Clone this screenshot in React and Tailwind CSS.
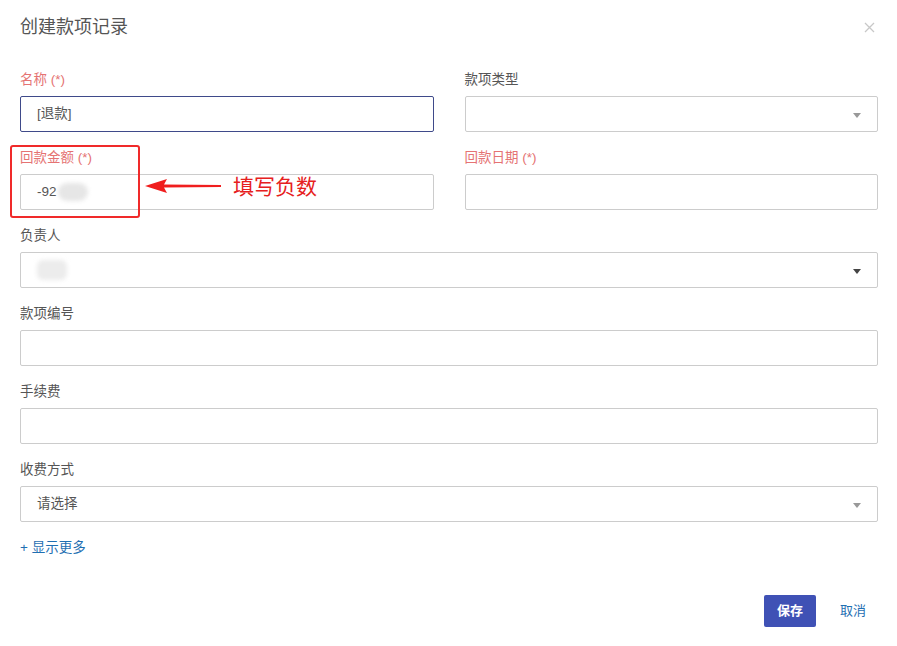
import React from "react";

const font = { fontFamily: '"Liberation Sans", "Noto Sans CJK SC", sans-serif' };

function Label({ children, required }) {
  return (
    <div className={`mb-[6px] h-[20px] text-[13.5px] leading-[20px] ${required ? "text-[#e57373]" : "text-[#555]"}`}>
      {children}
    </div>
  );
}

function Caret({ dark }) {
  return (
    <svg width="8" height="5" viewBox="0 0 8 5" className="absolute right-[16px] top-[16px]">
      <polygon points="0,0 8,0 4,5" fill={dark ? "#444" : "#999"} />
    </svg>
  );
}

function Box({ children, focused, className = "" }) {
  return (
    <div
      className={`relative flex h-[36px] items-center rounded-[2px] border bg-white pl-4 text-[13.5px] text-[#555] ${
        focused ? "border-[#3f4a8a]" : "border-[#ccc]"
      } ${className}`}
    >
      {children}
    </div>
  );
}

export default function App() {
  return (
    <div className="relative h-[646px] w-[897px] overflow-hidden bg-white" style={font}>
      <div className="flex h-[54px] items-center justify-between pl-5 pr-[20px]">
        <span className="text-[18px] text-[#555]">创建款项记录</span>
        <svg width="11" height="11" viewBox="0 0 11 11" className="mr-[2px]">
          <path d="M1 1L10 10M10 1L1 10" stroke="#c8c8c8" strokeWidth="1.3" />
        </svg>
      </div>

      <div className="pl-5 pr-[19px] pt-[16px]">
        <div className="grid grid-cols-2 gap-x-[31px] gap-y-[16px]">
          <div>
            <Label required>名称 (*)</Label>
            <Box focused>[退款]</Box>
          </div>
          <div>
            <Label>款项类型</Label>
            <Box>
              <Caret />
            </Box>
          </div>

          <div className="relative">
            <Label required>回款金额 (*)</Label>
            <Box>
              <span>-92</span>
              <span className="ml-[1px] h-[18px] w-[30px] rounded-full bg-[#e6e6e6] blur-[2px]" />
            </Box>
            <div className="pointer-events-none absolute left-[-10px] top-[-3px] h-[73px] w-[130px] rounded-[3px] border-[2.5px] border-[#f02a2a]" />
            <svg width="80" height="16" viewBox="0 0 80 16" className="absolute left-[125px] top-[30px]">
              <polygon points="0,8 22,1 19,6.5 76,7 76,9 19,9.5 22,15" fill="#f01e1e" />
            </svg>
            <span className="absolute left-[213px] top-[27px] text-[21px] leading-[24px] text-[#e62020]">填写负数</span>
          </div>
          <div>
            <Label required>回款日期 (*)</Label>
            <Box />
          </div>

          <div className="col-span-2">
            <Label>负责人</Label>
            <Box>
              <span className="h-[20px] w-[30px] rounded-[6px] bg-[#ececec] blur-[2px]" />
              <Caret dark />
            </Box>
          </div>

          <div className="col-span-2">
            <Label>款项编号</Label>
            <Box />
          </div>

          <div className="col-span-2">
            <Label>手续费</Label>
            <Box />
          </div>

          <div className="col-span-2">
            <Label>收费方式</Label>
            <Box>
              请选择
              <Caret />
            </Box>
          </div>

          <div className="col-span-2 h-[20px] text-[13.5px] leading-[20px] text-[#1f6fb2]">+ 显示更多</div>
        </div>

        <div className="mt-[37px] flex items-center justify-end pr-[12px]">
          <button className="h-[32px] w-[52px] rounded-[2px] bg-[#3f51b5] text-[13px] font-bold text-white">保存</button>
          <button className="ml-[24px] text-[13px] text-[#1f6fb2]">取消</button>
        </div>
      </div>
    </div>
  );
}
